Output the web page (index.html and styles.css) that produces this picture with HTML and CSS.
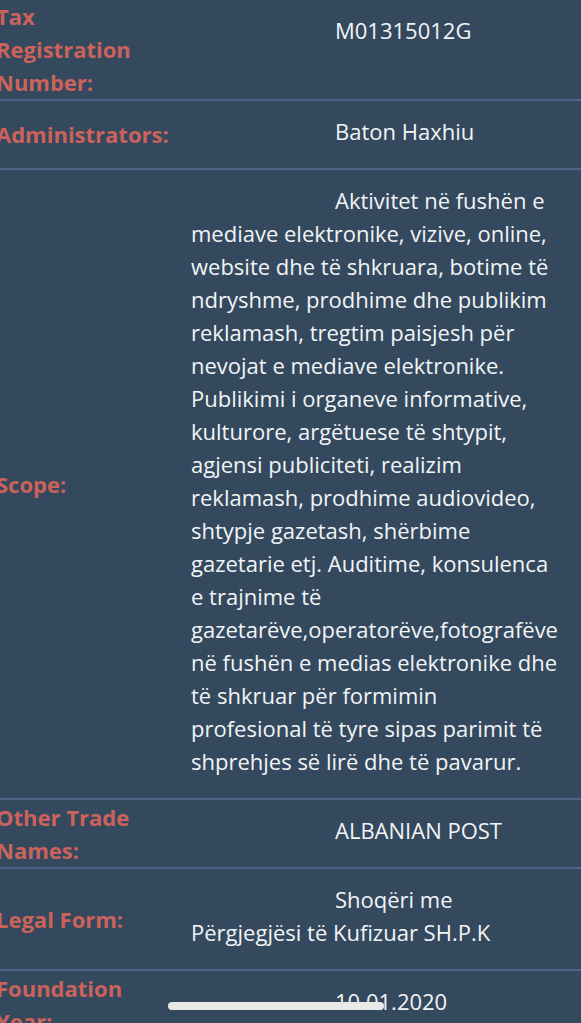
FILE: index.html
```html
<!DOCTYPE html>
<html lang="sq">
<head>
<meta charset="utf-8">
<title>Company details</title>
<link rel="stylesheet" href="styles.css">
</head>
<body>
<div class="table">
  <div class="row">
    <div class="label">Tax Registration Number:</div>
    <div class="value">M01315012G</div>
  </div>
  <div class="row">
    <div class="label">Administrators:</div>
    <div class="value">Baton Haxhiu</div>
  </div>
  <div class="row">
    <div class="label">Scope:</div>
    <div class="value">Aktivitet në fushën e mediave elektronike, vizive, online, website dhe të shkruara, botime të ndryshme, prodhime dhe publikim reklamash, tregtim paisjesh për nevojat e mediave elektronike. Publikimi i organeve informative, kulturore, argëtuese të shtypit, agjensi publiciteti, realizim reklamash, prodhime audiovideo, shtypje gazetash, shërbime gazetarie etj. Auditime, konsulenca e trajnime të gazetarëve,operatorëve,fotografëve në fushën e medias elektronike dhe të shkruar për formimin profesional të tyre sipas parimit të shprehjes së lirë dhe të pavarur.</div>
  </div>
  <div class="row">
    <div class="label">Other Trade Names:</div>
    <div class="value">ALBANIAN POST</div>
  </div>
  <div class="row">
    <div class="label">Legal Form:</div>
    <div class="value">Shoqëri me Përgjegjësi të Kufizuar SH.P.K</div>
  </div>
  <div class="row">
    <div class="label">Foundation Year:</div>
    <div class="value">10.01.2020</div>
  </div>
</div>
<div class="home-indicator"></div>
</body>
</html>
```

FILE: styles.css
```css
html, body {
  margin: 0;
  padding: 0;
  background: #34495e;
  overflow: hidden;
}

body {
  font-family: "Open Sans", "Noto Sans", sans-serif;
  font-size: 22px;
  line-height: 33px;
  width: 581px;
  height: 1023px;
}

.table {
  display: flex;
  flex-direction: column;
  margin-left: -4px;
  width: 585px;
}

.row {
  display: grid;
  grid-template-columns: 172px 1fr;
  column-gap: 23px;
  border-bottom: 2px solid #4a6584;
}

.label {
  align-self: center;
  color: #cb625b;
  font-weight: 700;
}

.value {
  color: #f2f4f6;
  padding: 14px 23px 20px 0;
  text-indent: 144px;
}

.home-indicator {
  position: fixed;
  left: 168px;
  top: 1002px;
  width: 216px;
  height: 8px;
  border-radius: 4px;
  background: #e9e9e9;
}
```
